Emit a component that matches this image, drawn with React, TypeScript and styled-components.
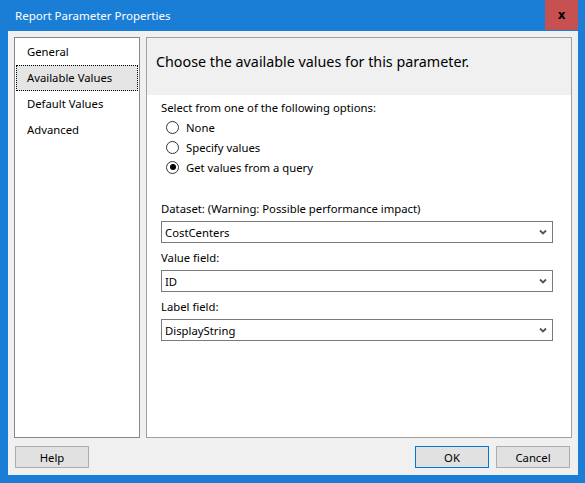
import React from 'react';
import styled, { createGlobalStyle } from 'styled-components';

const GlobalStyle = createGlobalStyle`
	html, body {
		margin: 0;
		padding: 0;
		background: #1b7ed6;
	}
	* {
		box-sizing: border-box;
	}
`;

const Window = styled.div`
	width: 585px;
	height: 483px;
	background: #1b7ed6;
	display: flex;
	flex-direction: column;
	font-family: 'Noto Sans', 'Open Sans', sans-serif;
	font-size: 11.3px;
	color: #000;
`;

const TitleBar = styled.div`
	height: 31px;
	display: flex;
	align-items: flex-start;
	justify-content: space-between;
	padding-left: 15px;
	padding-right: 7px;
`;

const Title = styled.div`
	color: #fff;
	line-height: 31px;
	font-size: 11.5px;
`;

const CloseButton = styled.div`
	width: 33px;
	height: 30px;
	background: #c75050;
	display: flex;
	align-items: center;
	justify-content: center;
	font-family: 'DejaVu Sans', sans-serif;
	font-weight: bold;
	font-size: 12px;
	color: #000;
`;

const Client = styled.div`
	flex: 1;
	margin: 0 7px 8px 8px;
	background: #f0f0f0;
	display: flex;
	flex-direction: column;
	padding: 6px 6px 7px 6px;
`;

const Body = styled.div`
	display: flex;
	gap: 6px;
	height: 401px;
`;

const NavList = styled.div`
	width: 126px;
	background: #fff;
	border: 1px solid #828790;
	display: flex;
	flex-direction: column;
	padding: 1px;
`;

const NavItem = styled.div<{ $active?: boolean }>`
	height: 26px;
	line-height: 24px;
	padding-left: 10px;
	border: 1px dotted ${({ $active }) => ($active ? '#000' : 'transparent')};
	background: ${({ $active }) => ($active ? '#e5e5e5' : 'transparent')};
`;

const Panel = styled.div`
	flex: 1;
	background: #fff;
	border: 1px solid #a0a0a0;
	display: flex;
	flex-direction: column;
`;

const PanelHeader = styled.div`
	height: 57px;
	background: #f0f0f0;
	padding-left: 9px;
	padding-top: 14px;
	font-size: 14.3px;
	line-height: 20px;
`;

const PanelContent = styled.div`
	padding: 4px 18px 0 14px;
	display: flex;
	flex-direction: column;
`;

const Label = styled.div`
	height: 17px;
	line-height: 17px;
`;

const RadioGroup = styled.div`
	display: flex;
	flex-direction: column;
	padding-left: 5px;
	margin-top: 1px;
	margin-bottom: 23px;
`;

const RadioRow = styled.div`
	height: 20px;
	display: flex;
	align-items: center;
	gap: 7px;
`;

const RadioCircle = styled.div<{ $checked?: boolean }>`
	width: 13px;
	height: 13px;
	border-radius: 50%;
	border: 1px solid #333;
	background: #fff;
	display: flex;
	align-items: center;
	justify-content: center;
	&::after {
		content: '';
		width: 6px;
		height: 6px;
		border-radius: 50%;
		background: ${({ $checked }) => ($checked ? '#000' : 'transparent')};
	}
`;

const Field = styled.div`
	display: flex;
	flex-direction: column;
	gap: 4px;
	margin-bottom: 6px;
`;

const Combo = styled.div`
	height: 22px;
	border: 1px solid #7a7a7a;
	background: #fff;
	display: flex;
	align-items: center;
	justify-content: space-between;
	padding: 0 4px 0 3px;
`;

const Footer = styled.div`
	display: flex;
	align-items: center;
	margin-top: 8px;
	padding-left: 1px;
	padding-right: 2px;
`;

const Button = styled.div<{ $default?: boolean }>`
	width: 74px;
	height: 22px;
	background: #e1e1e1;
	border: 1px solid ${({ $default }) => ($default ? '#0078d7' : '#adadad')};
	display: flex;
	align-items: center;
	justify-content: center;
`;

const Spacer = styled.div`
	flex: 1;
`;

const ButtonGap = styled.div`
	width: 7px;
`;

const Chevron = () => (
	<svg width="8" height="6" viewBox="0 0 8 6" style={{ marginRight: 1 }}>
		<path d="M1 1.5 L4 4.5 L7 1.5" fill="none" stroke="#555" strokeWidth="1.8" />
	</svg>
);

const fields = [
	{ label: 'Dataset: (Warning: Possible performance impact)', value: 'CostCenters' },
	{ label: 'Value field:', value: 'ID' },
	{ label: 'Label field:', value: 'DisplayString' },
];

const options = ['None', 'Specify values', 'Get values from a query'];

const App = () => {
	return (
		<Window>
			<GlobalStyle />
			<TitleBar>
				<Title>Report Parameter Properties</Title>
				<CloseButton>x</CloseButton>
			</TitleBar>
			<Client>
				<Body>
					<NavList>
						<NavItem>General</NavItem>
						<NavItem $active>Available Values</NavItem>
						<NavItem>Default Values</NavItem>
						<NavItem>Advanced</NavItem>
					</NavList>
					<Panel>
						<PanelHeader>Choose the available values for this parameter.</PanelHeader>
						<PanelContent>
							<Label>Select from one of the following options:</Label>
							<RadioGroup>
								{options.map((o, i) => (
									<RadioRow key={o}>
										<RadioCircle $checked={i === 2} />
										{o}
									</RadioRow>
								))}
							</RadioGroup>
							{fields.map((f) => (
								<Field key={f.label}>
									<Label>{f.label}</Label>
									<Combo>
										{f.value}
										<Chevron />
									</Combo>
								</Field>
							))}
						</PanelContent>
					</Panel>
				</Body>
				<Footer>
					<Button>Help</Button>
					<Spacer />
					<Button $default>OK</Button>
					<ButtonGap />
					<Button>Cancel</Button>
				</Footer>
			</Client>
		</Window>
	);
};

export default App;
